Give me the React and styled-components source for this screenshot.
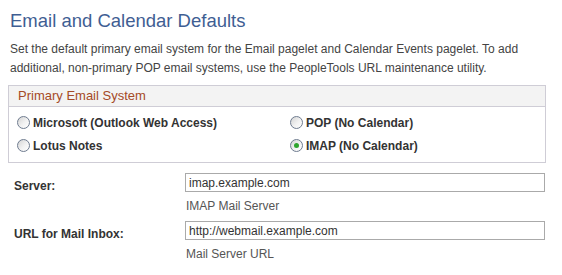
import React from "react";
import styled, { createGlobalStyle } from "styled-components";

const GlobalStyle = createGlobalStyle`
  body {
    margin: 0;
    background: #fff;
    font-family: "Liberation Sans", Arial, sans-serif;
  }
`;

const Page = styled.div`
  padding: 9px 17px 0 8px;
  width: 538px;
`;

const Title = styled.h1`
  margin: 0 0 0 2px;
  font-size: 18.5px;
  line-height: 24px;
  font-weight: normal;
  color: #3f5e93;
`;

const Description = styled.p`
  margin: 7px 0 0 2px;
  font-size: 12px;
  line-height: 19px;
  color: #444;
`;

const GroupBox = styled.div`
  margin-top: 7px;
  border: 1px solid #cfcdd6;
  border-top-width: 0;
`;

const GroupHeader = styled.div`
  height: 20px;
  line-height: 20px;
  margin: 0 -1px;
  padding-left: 9px;
  background: #f3f3f3;
  border: 1px solid #cfcdd6;
  font-size: 13px;
  color: #a54a26;
`;

const RadioGrid = styled.div`
  display: grid;
  grid-template-columns: 273px 1fr;
  grid-auto-rows: 23px;
  padding: 4px 0 5px 8px;
`;

const RadioOption = styled.label`
  display: flex;
  align-items: center;
  gap: 3px;
  font-size: 12px;
  font-weight: bold;
  color: #333;
`;

const RadioCircle = styled.span`
  position: relative;
  width: 11px;
  height: 11px;
  border-radius: 50%;
  border: 1px solid #6f7c90;
  background: linear-gradient(135deg, #d4d4d4 0%, #f2f2f2 55%, #ffffff 100%);
  flex-shrink: 0;

  &::after {
    content: "";
    display: ${({ $checked }) => ($checked ? "block" : "none")};
    position: absolute;
    left: 3px;
    top: 3px;
    width: 5px;
    height: 5px;
    border-radius: 50%;
    background: #2ea52e;
  }
`;

const FormGrid = styled.div`
  display: grid;
  grid-template-columns: 177px 360px;
  margin-top: 10px;
`;

const FieldLabel = styled.div`
  padding: 6px 0 0 6px;
  font-size: 12px;
  font-weight: bold;
  color: #333;
`;

const FieldCell = styled.div`
  display: flex;
  flex-direction: column;
`;

const TextInput = styled.input`
  box-sizing: border-box;
  width: 360px;
  height: 19px;
  margin: 0;
  padding: 0 3px;
  border: 1px solid #aaa;
  font-family: "Liberation Sans", Arial, sans-serif;
  font-size: 12px;
  color: #333;
  outline: none;
`;

const Hint = styled.div`
  height: 29px;
  line-height: 29px;
  padding-left: 1px;
  font-size: 12px;
  color: #555;
`;

const options = [
  { label: "Microsoft (Outlook Web Access)", checked: false },
  { label: "POP (No Calendar)", checked: false },
  { label: "Lotus Notes", checked: false },
  { label: "IMAP (No Calendar)", checked: true },
];

const fields = [
  { label: "Server:", value: "imap.example.com", hint: "IMAP Mail Server" },
  { label: "URL for Mail Inbox:", value: "http://webmail.example.com", hint: "Mail Server URL" },
];

export default function App() {
  return (
    <Page>
      <GlobalStyle />
      <Title>Email and Calendar Defaults</Title>
      <Description>
        Set the default primary email system for the Email pagelet and Calendar Events pagelet. To add
        additional, non-primary POP email systems, use the PeopleTools URL maintenance utility.
      </Description>

      <GroupBox>
        <GroupHeader>Primary Email System</GroupHeader>
        <RadioGrid>
          {options.map((opt) => (
            <RadioOption key={opt.label}>
              <RadioCircle $checked={opt.checked} />
              {opt.label}
            </RadioOption>
          ))}
        </RadioGrid>
      </GroupBox>

      <FormGrid>
        {fields.map((f) => (
          <React.Fragment key={f.label}>
            <FieldLabel>{f.label}</FieldLabel>
            <FieldCell>
              <TextInput defaultValue={f.value} />
              <Hint>{f.hint}</Hint>
            </FieldCell>
          </React.Fragment>
        ))}
      </FormGrid>
    </Page>
  );
}
